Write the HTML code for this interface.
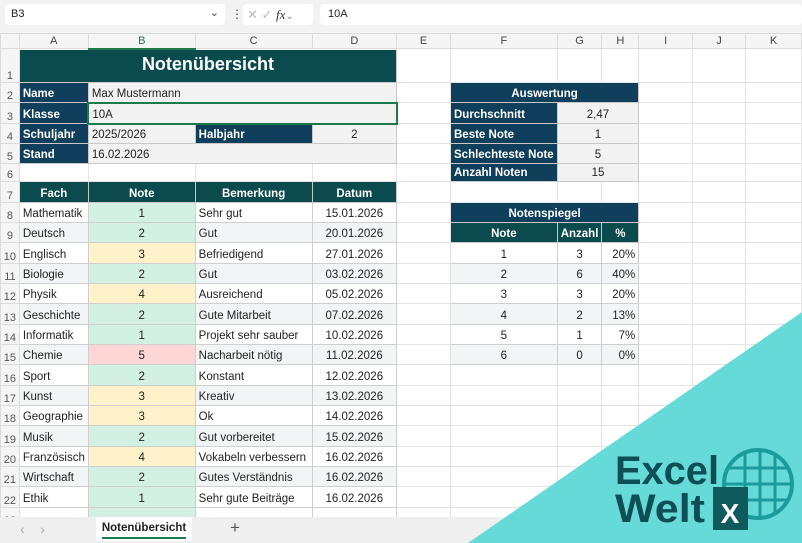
<!DOCTYPE html><html><head><meta charset="utf-8"><style>
*{box-sizing:border-box;margin:0;padding:0}
body{width:802px;height:543px;overflow:hidden;background:#fff;font-family:"Liberation Sans",sans-serif;font-size:11px;color:#222;position:relative}
#fb{position:absolute;left:0;top:0;width:802px;height:33px;background:#f3f3f3}
.box{position:absolute;background:#fff;border-radius:4px;top:4px;height:21px}
table{position:absolute;left:0;top:33px;border-collapse:collapse;table-layout:fixed}
td{border:1px solid #e3e3e3;padding:0 3px;white-space:nowrap;overflow:hidden;font-size:11.5px;vertical-align:bottom;padding-bottom:2px}
tr.h td{background:#f5f5f5;color:#444;text-align:center;font-size:11px;border-color:#dcdcdc;padding-bottom:1px}
td.rh{background:#f5f5f5;color:#555;text-align:center;padding:0;font-size:11px;vertical-align:bottom;border-color:#dcdcdc}
.n{background:#0f3f5a;color:#fff;font-weight:bold;border-color:#c9c9c9}
.t{background:#0b4a4d;color:#fff;font-weight:bold;text-align:center;border-color:#c9c9c9}
.g{background:#f2f2f2;border-color:#c9c9c9}
.c{text-align:center}
.w{background:#fff;border-color:#cfcfcf}
.a{background:#f1f5f6;border-color:#cfcfcf}
.gr{background:#d3f1e2;border-color:#cfcfcf;text-align:center}
.ye{background:#fff2cb;border-color:#cfcfcf;text-align:center}
.re{background:#ffd6d6;border-color:#cfcfcf;text-align:center}
</style></head><body>
<div id="fb">
<div class="box" style="left:5px;width:220px;padding:4px 6px;font-size:11px">B3<span style="position:absolute;right:6px;top:2px;color:#444">&#8964;</span></div>
<div style="position:absolute;left:231px;top:7px;color:#444;font-size:12px">&#8942;</div>
<div class="box" style="left:243px;width:70px;color:#bbb;padding:3px 4px;font-size:13px">✕ ✓ <i style="color:#333;font-family:'Liberation Serif',serif">fx</i><span style="color:#888;font-size:10px">⌄</span></div>
<div class="box" style="left:320px;width:482px;padding:4px 8px;font-size:11px">10A</div>
</div>
<table>
<colgroup><col style="width:19px"><col style="width:69px"><col style="width:108px"><col style="width:117px"><col style="width:85px"><col style="width:55px"><col style="width:103px"><col style="width:41px"><col style="width:37px"><col style="width:55px"><col style="width:54px"><col style="width:57px"></colgroup>
<tr class="h" style="height:15px"><td style="background:#f5f5f5"></td><td>A</td><td style="color:#1a7a4a;border-bottom:2px solid #1a7a4a">B</td><td>C</td><td>D</td><td>E</td><td>F</td><td>G</td><td>H</td><td>I</td><td>J</td><td>K</td></tr>
<tr style="height:34px"><td class="rh">1</td><td colspan="4" class="t" style="font-size:18px;vertical-align:middle">Notenübersicht</td><td></td><td></td><td></td><td></td><td></td><td></td><td></td></tr>
<tr style="height:20px"><td class="rh">2</td><td class="n">Name</td><td colspan="3" class="g">Max Mustermann</td><td></td><td colspan="3" class="n" style="text-align:center">Auswertung</td><td></td><td></td><td></td></tr>
<tr style="height:21px"><td class="rh">3</td><td class="n">Klasse</td><td colspan="3" class="g" style="border:2px solid #1a7a4a">10A</td><td></td><td class="n">Durchschnitt</td><td colspan="2" class="g c">2,47</td><td></td><td></td><td></td></tr>
<tr style="height:20px"><td class="rh">4</td><td class="n">Schuljahr</td><td class="g">2025/2026</td><td class="n">Halbjahr</td><td class="g c">2</td><td></td><td class="n">Beste Note</td><td colspan="2" class="g c">1</td><td></td><td></td><td></td></tr>
<tr style="height:20px"><td class="rh">5</td><td class="n">Stand</td><td colspan="3" class="g">16.02.2026</td><td></td><td class="n">Schlechteste Note</td><td colspan="2" class="g c">5</td><td></td><td></td><td></td></tr>
<tr style="height:18px"><td class="rh">6</td><td></td><td></td><td></td><td></td><td></td><td class="n">Anzahl Noten</td><td colspan="2" class="g c">15</td><td></td><td></td><td></td></tr>
<tr style="height:21px"><td class="rh">7</td><td class="t">Fach</td><td class="t">Note</td><td class="t">Bemerkung</td><td class="t">Datum</td><td></td><td></td><td></td><td></td><td></td><td></td><td></td></tr>
<tr style="height:20px"><td class="rh">8</td><td class="w">Mathematik</td><td class="gr">1</td><td class="w">Sehr gut</td><td class="w c">15.01.2026</td><td></td><td colspan="3" class="n" style="text-align:center">Notenspiegel</td><td></td><td></td><td></td></tr>
<tr style="height:20px"><td class="rh">9</td><td class="a">Deutsch</td><td class="gr">2</td><td class="a">Gut</td><td class="a c">20.01.2026</td><td></td><td class="t">Note</td><td class="t">Anzahl</td><td class="t">%</td><td></td><td></td><td></td></tr>
<tr style="height:21px"><td class="rh">10</td><td class="w">Englisch</td><td class="ye">3</td><td class="w">Befriedigend</td><td class="w c">27.01.2026</td><td></td><td class="w c">1</td><td class="w c">3</td><td class="w" style="text-align:right">20%</td><td></td><td></td><td></td></tr>
<tr style="height:20px"><td class="rh">11</td><td class="a">Biologie</td><td class="gr">2</td><td class="a">Gut</td><td class="a c">03.02.2026</td><td></td><td class="a c">2</td><td class="a c">6</td><td class="a" style="text-align:right">40%</td><td></td><td></td><td></td></tr>
<tr style="height:20px"><td class="rh">12</td><td class="w">Physik</td><td class="ye">4</td><td class="w">Ausreichend</td><td class="w c">05.02.2026</td><td></td><td class="w c">3</td><td class="w c">3</td><td class="w" style="text-align:right">20%</td><td></td><td></td><td></td></tr>
<tr style="height:21px"><td class="rh">13</td><td class="a">Geschichte</td><td class="gr">2</td><td class="a">Gute Mitarbeit</td><td class="a c">07.02.2026</td><td></td><td class="a c">4</td><td class="a c">2</td><td class="a" style="text-align:right">13%</td><td></td><td></td><td></td></tr>
<tr style="height:20px"><td class="rh">14</td><td class="w">Informatik</td><td class="gr">1</td><td class="w">Projekt sehr sauber</td><td class="w c">10.02.2026</td><td></td><td class="w c">5</td><td class="w c">1</td><td class="w" style="text-align:right">7%</td><td></td><td></td><td></td></tr>
<tr style="height:20px"><td class="rh">15</td><td class="a">Chemie</td><td class="re">5</td><td class="a">Nacharbeit nötig</td><td class="a c">11.02.2026</td><td></td><td class="a c">6</td><td class="a c">0</td><td class="a" style="text-align:right">0%</td><td></td><td></td><td></td></tr>
<tr style="height:21px"><td class="rh">16</td><td class="w">Sport</td><td class="gr">2</td><td class="w">Konstant</td><td class="w c">12.02.2026</td><td></td><td></td><td></td><td></td><td></td><td></td><td></td></tr>
<tr style="height:20px"><td class="rh">17</td><td class="a">Kunst</td><td class="ye">3</td><td class="a">Kreativ</td><td class="a c">13.02.2026</td><td></td><td></td><td></td><td></td><td></td><td></td><td></td></tr>
<tr style="height:20px"><td class="rh">18</td><td class="w">Geographie</td><td class="ye">3</td><td class="w">Ok</td><td class="w c">14.02.2026</td><td></td><td></td><td></td><td></td><td></td><td></td><td></td></tr>
<tr style="height:21px"><td class="rh">19</td><td class="a">Musik</td><td class="gr">2</td><td class="a">Gut vorbereitet</td><td class="a c">15.02.2026</td><td></td><td></td><td></td><td></td><td></td><td></td><td></td></tr>
<tr style="height:20px"><td class="rh">20</td><td class="w">Französisch</td><td class="ye">4</td><td class="w">Vokabeln verbessern</td><td class="w c">16.02.2026</td><td></td><td></td><td></td><td></td><td></td><td></td><td></td></tr>
<tr style="height:20px"><td class="rh">21</td><td class="a">Wirtschaft</td><td class="gr">2</td><td class="a">Gutes Verständnis</td><td class="a c">16.02.2026</td><td></td><td></td><td></td><td></td><td></td><td></td><td></td></tr>
<tr style="height:21px"><td class="rh">22</td><td class="w">Ethik</td><td class="gr">1</td><td class="w">Sehr gute Beiträge</td><td class="w c">16.02.2026</td><td></td><td></td><td></td><td></td><td></td><td></td><td></td></tr>
<tr style="height:20px"><td class="rh">23</td><td class="w"></td><td class="gr"></td><td class="w"></td><td class="w"></td><td></td><td></td><td></td><td></td><td></td><td></td><td></td></tr>
</table>
<div style="position:absolute;left:0;top:517px;width:802px;height:26px;background:#efefef"></div>
<div style="position:absolute;left:20px;top:521px;color:#aaa;font-size:14px">&#8249;&nbsp;&nbsp;&nbsp;&nbsp;&#8250;</div>
<div style="position:absolute;left:96px;top:517px;width:96px;height:24px;background:#fff;font-weight:bold;font-size:11.5px;text-align:center;padding-top:5px">Notenübersicht<div style="position:absolute;left:6px;right:6px;bottom:2px;height:2px;background:#1a7a4a"></div></div>
<div style="position:absolute;left:230px;top:518px;color:#555;font-size:17px">+</div>
<svg style="position:absolute;left:0;top:0" width="802" height="543">
<polygon points="802,312 802,543 468,543" fill="#66d9d9"/>
<circle cx="758" cy="484" r="34" fill="none" stroke="#1a9c9c" stroke-width="4"/>
<g stroke="#1a9c9c" stroke-width="3"><line x1="745" y1="452" x2="745" y2="516"/><line x1="760" y1="450" x2="760" y2="518"/><line x1="775" y1="455" x2="775" y2="513"/><line x1="728" y1="468" x2="788" y2="468"/><line x1="725" y1="484" x2="791" y2="484"/><line x1="728" y1="500" x2="788" y2="500"/></g>
<rect x="713" y="487" width="35" height="43" fill="#0f5a5c"/>
<text x="730" y="523" fill="#fff" font-family="Liberation Sans" font-weight="bold" font-size="28" text-anchor="middle">X</text>
<text x="615" y="484" fill="#0e4e55" font-family="Liberation Sans" font-weight="bold" font-size="40" textLength="104" lengthAdjust="spacingAndGlyphs">Excel</text>
<text x="615" y="522" fill="#0e4e55" font-family="Liberation Sans" font-weight="bold" font-size="40" textLength="90" lengthAdjust="spacingAndGlyphs">Welt</text>
</svg>
</body></html>
